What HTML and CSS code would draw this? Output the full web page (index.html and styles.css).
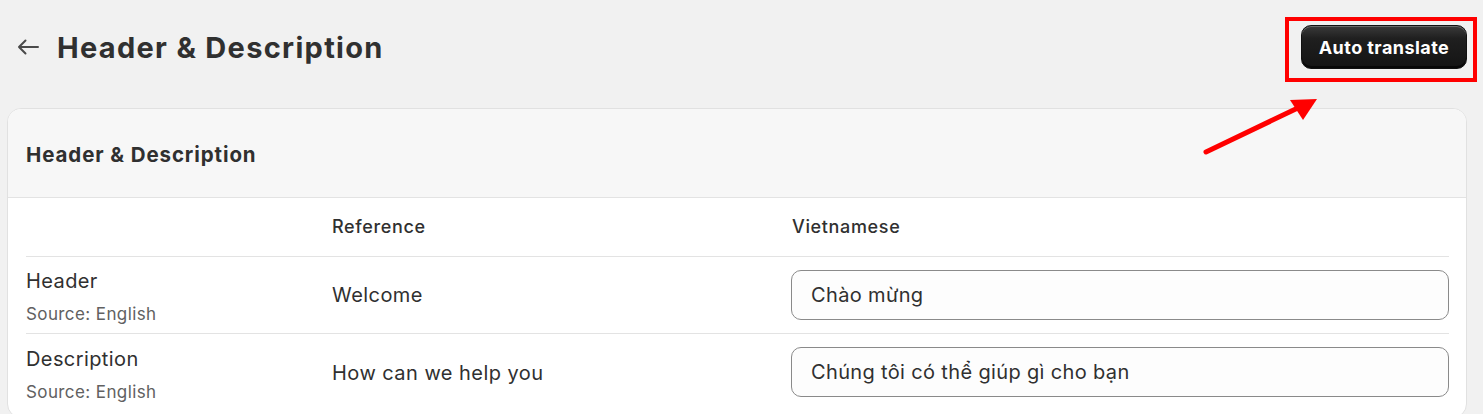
FILE: index.html
```html
<!DOCTYPE html>
<html>
<head>
<meta charset="utf-8">
<link rel="stylesheet" href="styles.css">
</head>
<body>
<div class="page">
  <div class="topbar">
    <div class="title-wrap">
      <svg class="back" width="22" height="16" viewBox="0 0 22 16"><path d="M21 8H2M8.5 1.5 2 8l6.5 6.5" fill="none" stroke="#4a4a4a" stroke-width="2" stroke-linecap="round" stroke-linejoin="round"/></svg>
      <h1 class="title">Header &amp; Description</h1>
    </div>
    <button class="btn">Auto translate</button>
  </div>
  <div class="card">
    <div class="card-head">Header &amp; Description</div>
    <div class="grid">
      <div class="cell th"></div>
      <div class="cell th">Reference</div>
      <div class="cell th">Vietnamese</div>

      <div class="cell label"><div class="name">Header</div><div class="src">Source: English</div></div>
      <div class="cell ref">Welcome</div>
      <div class="cell inp"><div class="field">Chào mừng</div></div>

      <div class="cell label last"><div class="name">Description</div><div class="src">Source: English</div></div>
      <div class="cell ref last">How can we help you</div>
      <div class="cell inp last"><div class="field">Chúng tôi có thể giúp gì cho bạn</div></div>
    </div>
  </div>
  <div class="highlight"></div>
  <svg class="pointer" width="140" height="70" viewBox="0 0 140 70"><path d="M16 62 L112 16" stroke="#ff0000" stroke-width="5" stroke-linecap="round"/><path d="M127 9 L100 10 L113 30 Z" fill="#ff0000"/></svg>
</div>
</body>
</html>
```
FILE: styles.css
```css
* { box-sizing: border-box; }
body {
  margin: 0;
  background: #f1f1f1;
  font-family: Inter, "Noto Sans", sans-serif;
  color: #303030;
  height: 414px;
  overflow: hidden;
}
.page {
  position: relative;
  padding: 0 16px 0 7px;
}
.topbar {
  height: 94px;
  margin-bottom: 14px;
  display: flex;
  align-items: center;
  justify-content: space-between;
}
.title-wrap {
  display: flex;
  align-items: center;
  gap: 18px;
  padding-left: 10px;
}
.back { display: block; }
.title {
  margin: 0;
  font-size: 29px;
  font-weight: 700;
  letter-spacing: 1.3px;
  color: #303030;
}
.btn {
  width: 166px;
  height: 44px;
  border: 1px solid #111;
  border-radius: 10px;
  background: linear-gradient(#3a3a3a, #1f1f1f 30%, #141414);
  box-shadow: inset 0 1px 0 rgba(255,255,255,0.25), inset 0 -2px 0 rgba(0,0,0,0.6);
  color: #fff;
  font-family: Inter, sans-serif;
  font-size: 18px;
  font-weight: 700;
  letter-spacing: 0.45px;
}
.card {
  background: #fff;
  border: 1px solid #e1e1e1;
  border-radius: 14px;
  overflow: hidden;
  padding-bottom: 6px;
}
.card-head {
  height: 89px;
  background: #f7f7f7;
  border-bottom: 1px solid #e3e3e3;
  display: flex;
  align-items: center;
  padding-left: 18px;
  padding-top: 2px;
  font-size: 20.5px;
  font-weight: 700;
  letter-spacing: 0.9px;
}
.grid {
  display: grid;
  grid-template-columns: 306px 459px 1fr;
  padding: 0 17px 0 18px;
}
.cell {
  border-bottom: 1px solid #e3e3e3;
  display: flex;
  align-items: center;
}
.cell.last { border-bottom: none; }
.th {
  height: 59px;
  padding-bottom: 2px;
  font-size: 18px;
  font-weight: 500;
  letter-spacing: 0.65px;
}
.th:nth-child(3) { padding-left: 1px; }
.label {
  height: 77px;
  flex-direction: column;
  align-items: flex-start;
  justify-content: center;
  gap: 11px;
  padding-top: 3px;
}
.name { font-size: 20px; letter-spacing: 0.4px; }
.src { font-size: 17px; letter-spacing: 0.4px; color: #616161; }
.ref { height: 77px; font-size: 20px; letter-spacing: 0.45px; }
.inp { height: 77px; padding-bottom: 1px; }
.field {
  width: 100%;
  height: 50px;
  border: 1px solid #8a8a8a;
  border-radius: 10px;
  background: #fdfdfd;
  display: flex;
  align-items: center;
  padding-left: 19px;
  font-size: 20px;
  letter-spacing: 0.35px;
}
.highlight {
  position: absolute;
  left: 1285px;
  top: 17px;
  width: 192px;
  height: 65px;
  border: 4px solid #ff0000;
}
.pointer {
  position: absolute;
  left: 1190px;
  top: 90px;
}
```
